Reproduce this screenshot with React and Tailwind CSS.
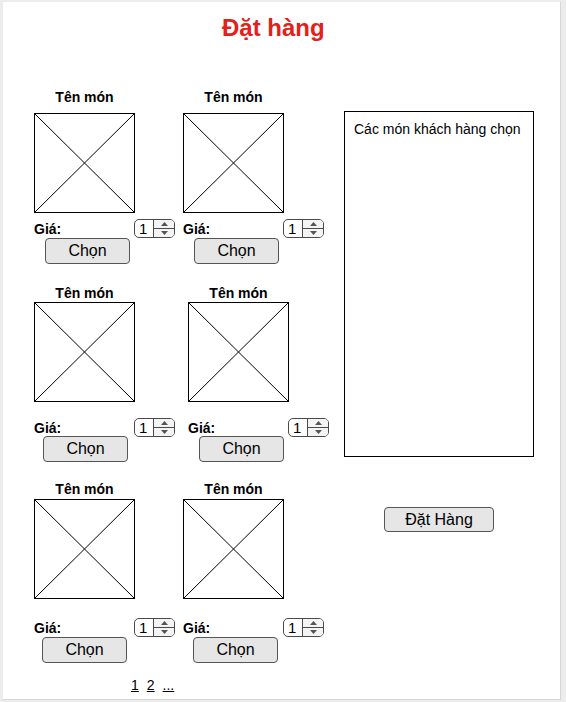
import React from 'react';

const rows = [
  {
    top: '',
    cards: [
      { gap: '', nameGap: 'mb-[8px]', spinGap: 'mt-[6px]', btnGap: 'mt-0', btnX: 'ml-[11px]' },
      { gap: 'ml-[8px]', nameGap: 'mb-[8px]', spinGap: 'mt-[6px]', btnGap: 'mt-0', btnX: 'ml-[11px]' },
    ],
  },
  {
    top: 'mt-[21px]',
    cards: [
      { gap: '', nameGap: 'mb-[1px]', spinGap: 'mt-[16px]', btnGap: '-mt-[1px]', btnX: 'ml-[9px]' },
      { gap: 'ml-[13px]', nameGap: 'mb-[1px]', spinGap: 'mt-[16px]', btnGap: '-mt-[1px]', btnX: 'ml-[11px]' },
    ],
  },
  {
    top: 'mt-[19px]',
    cards: [
      { gap: '', nameGap: 'mb-[2px]', spinGap: 'mt-[19px]', btnGap: 'mt-0', btnX: 'ml-[8px]' },
      { gap: 'ml-[8px]', nameGap: 'mb-[2px]', spinGap: 'mt-[19px]', btnGap: 'mt-0', btnX: 'ml-[10px]' },
    ],
  },
];

const Placeholder = () => (
  <div className="w-[101px] h-[100px] border border-black">
    <svg width="99" height="98" viewBox="0 0 99 98" className="block">
      <line x1="0" y1="0" x2="99" y2="98" stroke="#000" strokeWidth="1" />
      <line x1="99" y1="0" x2="0" y2="98" stroke="#000" strokeWidth="1" />
    </svg>
  </div>
);

const Spinner = () => (
  <div className="flex h-[19px] w-[41px] overflow-hidden rounded-[5px] border border-[#4a4a4a] bg-white">
    <span className="w-[18px] pl-[4px] text-[15px] leading-[17px] text-black">1</span>
    <div className="flex flex-1 flex-col border-l border-[#4a4a4a] bg-[#f4f4f4]">
      <div className="flex flex-1 items-center justify-center border-b border-[#4a4a4a]">
        <svg width="7" height="4" viewBox="0 0 7 4"><polygon points="3.5,0 7,4 0,4" fill="#555" /></svg>
      </div>
      <div className="flex flex-1 items-center justify-center">
        <svg width="7" height="4" viewBox="0 0 7 4"><polygon points="0,0 7,0 3.5,4" fill="#555" /></svg>
      </div>
    </div>
  </div>
);

const ProductCard = ({ gap, nameGap, spinGap, btnGap, btnX }) => (
  <div className={`flex w-[141px] flex-col ${gap}`}>
    <div className={`w-[101px] text-center text-[14px] font-bold leading-[16px] text-black ${nameGap}`}>Tên món</div>
    <Placeholder />
    <div className={`flex h-[19px] items-center justify-between ${spinGap}`}>
      <span className="text-[14px] font-bold leading-[16px] text-black">Giá:</span>
      <Spinner />
    </div>
    <button
      className={`h-[26px] w-[85px] rounded-[4px] border border-[#555] bg-[#e6e6e6] text-[16px] leading-[24px] text-black ${btnGap} ${btnX}`}
    >
      Chọn
    </button>
  </div>
);

export default function App() {
  return (
    <div className="h-[702px] w-[566px] bg-[#ececec] pl-[3px] pt-[2px] font-['Liberation_Sans',Arial,sans-serif]">
      <div className="flex h-[698px] w-[558px] flex-col border-r border-b border-[#d6d6d6] bg-white">
        <h1 className="ml-[219px] mt-[12px] text-[24px] font-bold leading-[28px] text-[#e3201b]">Đặt hàng</h1>

        <div className="ml-[31px] mt-[47px] flex">
          {/* Products */}
          <div className="flex w-[310px] flex-col">
            {rows.map((row, i) => (
              <div key={i} className={`flex ${row.top}`}>
                {row.cards.map((c, j) => (
                  <ProductCard key={j} {...c} />
                ))}
              </div>
            ))}
            <div className="ml-[97px] mt-[14px] flex gap-[8px] text-[14px] leading-[16px] text-black">
              <a className="underline">1</a>
              <a className="underline">2</a>
              <a className="underline">...</a>
            </div>
          </div>

          {/* Selected items */}
          <div className="mt-[22px] flex flex-col">
            <div className="h-[346px] w-[190px] border border-black pl-[9px] pt-[9px] text-[14px] leading-[16px] text-black">
              Các món khách hàng chọn
            </div>
            <button className="ml-[40px] mt-[50px] h-[25px] w-[110px] rounded-[4px] border border-[#555] bg-[#e6e6e6] text-[16px] leading-[22px] text-black">
              Đặt Hàng
            </button>
          </div>
        </div>
      </div>
    </div>
  );
}
